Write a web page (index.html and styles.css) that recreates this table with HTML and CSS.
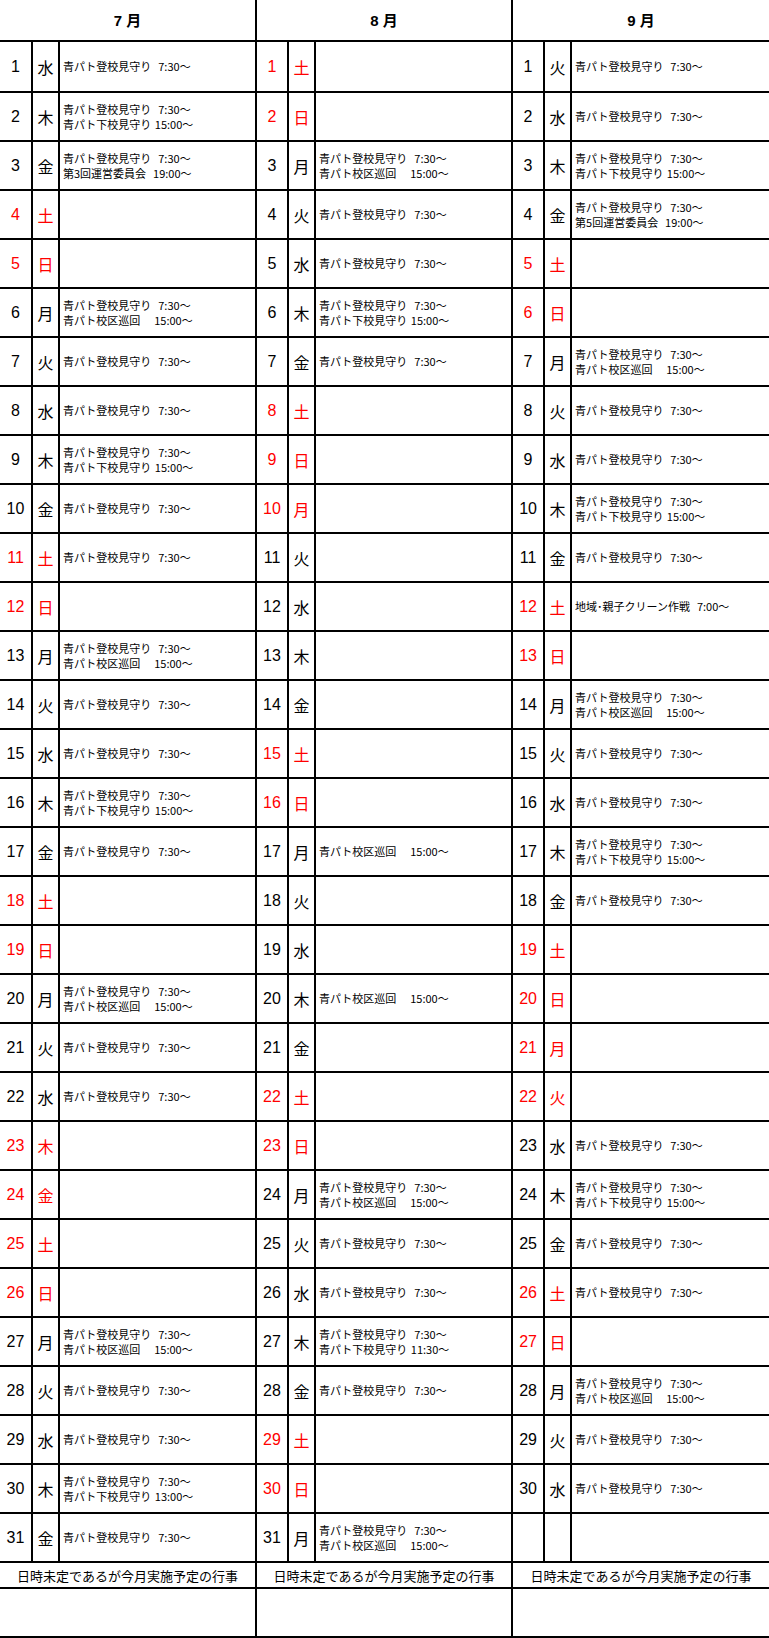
FILE: index.html
```html
<!DOCTYPE html>
<html lang="ja">
<head>
<meta charset="utf-8">
<title>7月・8月・9月 行事予定</title>
<link rel="stylesheet" href="styles.css">
</head>
<body>
<table class="cal">
<colgroup>
<col class="cd"><col class="cw"><col class="ct">
<col class="cd"><col class="cw"><col class="ct">
<col class="cd"><col class="cw"><col class="ct9">
</colgroup>
<thead>
<tr class="hd"><th colspan="3">7 月</th><th colspan="3">8 月</th><th colspan="3">9 月</th></tr>
</thead>
<tbody>
<tr class="first">
<td class="d">1</td><td class="w">水</td><td class="t"><div>青パト登校見守り  7:30～</div></td>
<td class="d r">1</td><td class="w r">土</td><td class="t"></td>
<td class="d">1</td><td class="w">火</td><td class="t"><div>青パト登校見守り  7:30～</div></td>
</tr>
<tr>
<td class="d">2</td><td class="w">木</td><td class="t"><div>青パト登校見守り  7:30～</div><div>青パト下校見守り 15:00～</div></td>
<td class="d r">2</td><td class="w r">日</td><td class="t"></td>
<td class="d">2</td><td class="w">水</td><td class="t"><div>青パト登校見守り  7:30～</div></td>
</tr>
<tr>
<td class="d">3</td><td class="w">金</td><td class="t"><div>青パト登校見守り  7:30～</div><div>第3回運営委員会  19:00～</div></td>
<td class="d">3</td><td class="w">月</td><td class="t"><div>青パト登校見守り  7:30～</div><div>青パト校区巡回    15:00～</div></td>
<td class="d">3</td><td class="w">木</td><td class="t"><div>青パト登校見守り  7:30～</div><div>青パト下校見守り 15:00～</div></td>
</tr>
<tr>
<td class="d r">4</td><td class="w r">土</td><td class="t"></td>
<td class="d">4</td><td class="w">火</td><td class="t"><div>青パト登校見守り  7:30～</div></td>
<td class="d">4</td><td class="w">金</td><td class="t"><div>青パト登校見守り  7:30～</div><div>第5回運営委員会  19:00～</div></td>
</tr>
<tr>
<td class="d r">5</td><td class="w r">日</td><td class="t"></td>
<td class="d">5</td><td class="w">水</td><td class="t"><div>青パト登校見守り  7:30～</div></td>
<td class="d r">5</td><td class="w r">土</td><td class="t"></td>
</tr>
<tr>
<td class="d">6</td><td class="w">月</td><td class="t"><div>青パト登校見守り  7:30～</div><div>青パト校区巡回    15:00～</div></td>
<td class="d">6</td><td class="w">木</td><td class="t"><div>青パト登校見守り  7:30～</div><div>青パト下校見守り 15:00～</div></td>
<td class="d r">6</td><td class="w r">日</td><td class="t"></td>
</tr>
<tr>
<td class="d">7</td><td class="w">火</td><td class="t"><div>青パト登校見守り  7:30～</div></td>
<td class="d">7</td><td class="w">金</td><td class="t"><div>青パト登校見守り  7:30～</div></td>
<td class="d">7</td><td class="w">月</td><td class="t"><div>青パト登校見守り  7:30～</div><div>青パト校区巡回    15:00～</div></td>
</tr>
<tr>
<td class="d">8</td><td class="w">水</td><td class="t"><div>青パト登校見守り  7:30～</div></td>
<td class="d r">8</td><td class="w r">土</td><td class="t"></td>
<td class="d">8</td><td class="w">火</td><td class="t"><div>青パト登校見守り  7:30～</div></td>
</tr>
<tr>
<td class="d">9</td><td class="w">木</td><td class="t"><div>青パト登校見守り  7:30～</div><div>青パト下校見守り 15:00～</div></td>
<td class="d r">9</td><td class="w r">日</td><td class="t"></td>
<td class="d">9</td><td class="w">水</td><td class="t"><div>青パト登校見守り  7:30～</div></td>
</tr>
<tr>
<td class="d">10</td><td class="w">金</td><td class="t"><div>青パト登校見守り  7:30～</div></td>
<td class="d r">10</td><td class="w r">月</td><td class="t"></td>
<td class="d">10</td><td class="w">木</td><td class="t"><div>青パト登校見守り  7:30～</div><div>青パト下校見守り 15:00～</div></td>
</tr>
<tr>
<td class="d r">11</td><td class="w r">土</td><td class="t"><div>青パト登校見守り  7:30～</div></td>
<td class="d">11</td><td class="w">火</td><td class="t"></td>
<td class="d">11</td><td class="w">金</td><td class="t"><div>青パト登校見守り  7:30～</div></td>
</tr>
<tr>
<td class="d r">12</td><td class="w r">日</td><td class="t"></td>
<td class="d">12</td><td class="w">水</td><td class="t"></td>
<td class="d r">12</td><td class="w r">土</td><td class="t"><div>地域･親子クリーン作戦  7:00～</div></td>
</tr>
<tr>
<td class="d">13</td><td class="w">月</td><td class="t"><div>青パト登校見守り  7:30～</div><div>青パト校区巡回    15:00～</div></td>
<td class="d">13</td><td class="w">木</td><td class="t"></td>
<td class="d r">13</td><td class="w r">日</td><td class="t"></td>
</tr>
<tr>
<td class="d">14</td><td class="w">火</td><td class="t"><div>青パト登校見守り  7:30～</div></td>
<td class="d">14</td><td class="w">金</td><td class="t"></td>
<td class="d">14</td><td class="w">月</td><td class="t"><div>青パト登校見守り  7:30～</div><div>青パト校区巡回    15:00～</div></td>
</tr>
<tr>
<td class="d">15</td><td class="w">水</td><td class="t"><div>青パト登校見守り  7:30～</div></td>
<td class="d r">15</td><td class="w r">土</td><td class="t"></td>
<td class="d">15</td><td class="w">火</td><td class="t"><div>青パト登校見守り  7:30～</div></td>
</tr>
<tr>
<td class="d">16</td><td class="w">木</td><td class="t"><div>青パト登校見守り  7:30～</div><div>青パト下校見守り 15:00～</div></td>
<td class="d r">16</td><td class="w r">日</td><td class="t"></td>
<td class="d">16</td><td class="w">水</td><td class="t"><div>青パト登校見守り  7:30～</div></td>
</tr>
<tr>
<td class="d">17</td><td class="w">金</td><td class="t"><div>青パト登校見守り  7:30～</div></td>
<td class="d">17</td><td class="w">月</td><td class="t"><div>青パト校区巡回    15:00～</div></td>
<td class="d">17</td><td class="w">木</td><td class="t"><div>青パト登校見守り  7:30～</div><div>青パト下校見守り 15:00～</div></td>
</tr>
<tr>
<td class="d r">18</td><td class="w r">土</td><td class="t"></td>
<td class="d">18</td><td class="w">火</td><td class="t"></td>
<td class="d">18</td><td class="w">金</td><td class="t"><div>青パト登校見守り  7:30～</div></td>
</tr>
<tr>
<td class="d r">19</td><td class="w r">日</td><td class="t"></td>
<td class="d">19</td><td class="w">水</td><td class="t"></td>
<td class="d r">19</td><td class="w r">土</td><td class="t"></td>
</tr>
<tr>
<td class="d">20</td><td class="w">月</td><td class="t"><div>青パト登校見守り  7:30～</div><div>青パト校区巡回    15:00～</div></td>
<td class="d">20</td><td class="w">木</td><td class="t"><div>青パト校区巡回    15:00～</div></td>
<td class="d r">20</td><td class="w r">日</td><td class="t"></td>
</tr>
<tr>
<td class="d">21</td><td class="w">火</td><td class="t"><div>青パト登校見守り  7:30～</div></td>
<td class="d">21</td><td class="w">金</td><td class="t"></td>
<td class="d r">21</td><td class="w r">月</td><td class="t"></td>
</tr>
<tr>
<td class="d">22</td><td class="w">水</td><td class="t"><div>青パト登校見守り  7:30～</div></td>
<td class="d r">22</td><td class="w r">土</td><td class="t"></td>
<td class="d r">22</td><td class="w r">火</td><td class="t"></td>
</tr>
<tr>
<td class="d r">23</td><td class="w r">木</td><td class="t"></td>
<td class="d r">23</td><td class="w r">日</td><td class="t"></td>
<td class="d">23</td><td class="w">水</td><td class="t"><div>青パト登校見守り  7:30～</div></td>
</tr>
<tr>
<td class="d r">24</td><td class="w r">金</td><td class="t"></td>
<td class="d">24</td><td class="w">月</td><td class="t"><div>青パト登校見守り  7:30～</div><div>青パト校区巡回    15:00～</div></td>
<td class="d">24</td><td class="w">木</td><td class="t"><div>青パト登校見守り  7:30～</div><div>青パト下校見守り 15:00～</div></td>
</tr>
<tr>
<td class="d r">25</td><td class="w r">土</td><td class="t"></td>
<td class="d">25</td><td class="w">火</td><td class="t"><div>青パト登校見守り  7:30～</div></td>
<td class="d">25</td><td class="w">金</td><td class="t"><div>青パト登校見守り  7:30～</div></td>
</tr>
<tr>
<td class="d r">26</td><td class="w r">日</td><td class="t"></td>
<td class="d">26</td><td class="w">水</td><td class="t"><div>青パト登校見守り  7:30～</div></td>
<td class="d r">26</td><td class="w r">土</td><td class="t"><div>青パト登校見守り  7:30～</div></td>
</tr>
<tr>
<td class="d">27</td><td class="w">月</td><td class="t"><div>青パト登校見守り  7:30～</div><div>青パト校区巡回    15:00～</div></td>
<td class="d">27</td><td class="w">木</td><td class="t"><div>青パト登校見守り  7:30～</div><div>青パト下校見守り 11:30～</div></td>
<td class="d r">27</td><td class="w r">日</td><td class="t"></td>
</tr>
<tr>
<td class="d">28</td><td class="w">火</td><td class="t"><div>青パト登校見守り  7:30～</div></td>
<td class="d">28</td><td class="w">金</td><td class="t"><div>青パト登校見守り  7:30～</div></td>
<td class="d">28</td><td class="w">月</td><td class="t"><div>青パト登校見守り  7:30～</div><div>青パト校区巡回    15:00～</div></td>
</tr>
<tr>
<td class="d">29</td><td class="w">水</td><td class="t"><div>青パト登校見守り  7:30～</div></td>
<td class="d r">29</td><td class="w r">土</td><td class="t"></td>
<td class="d">29</td><td class="w">火</td><td class="t"><div>青パト登校見守り  7:30～</div></td>
</tr>
<tr>
<td class="d">30</td><td class="w">木</td><td class="t"><div>青パト登校見守り  7:30～</div><div>青パト下校見守り 13:00～</div></td>
<td class="d r">30</td><td class="w r">日</td><td class="t"></td>
<td class="d">30</td><td class="w">水</td><td class="t"><div>青パト登校見守り  7:30～</div></td>
</tr>
<tr>
<td class="d">31</td><td class="w">金</td><td class="t"><div>青パト登校見守り  7:30～</div></td>
<td class="d">31</td><td class="w">月</td><td class="t"><div>青パト登校見守り  7:30～</div><div>青パト校区巡回    15:00～</div></td>
<td class="d"></td><td class="w"></td><td class="t"></td>
</tr>
<tr class="lbl">
<td colspan="3">日時未定であるが今月実施予定の行事</td>
<td colspan="3">日時未定であるが今月実施予定の行事</td>
<td colspan="3">日時未定であるが今月実施予定の行事</td>
</tr>
<tr class="blank">
<td colspan="3"></td><td colspan="3"></td><td colspan="3"></td>
</tr>
</tbody>
</table>
</body>
</html>
```
FILE: styles.css
```css
html, body {
  margin: 0;
  padding: 0;
  background: #fff;
}

body {
  font-family: "Noto Sans CJK JP", "Noto Sans", sans-serif;
  color: #000;
}

.cal {
  border-collapse: collapse;
  table-layout: fixed;
  width: 769px;
  border: none;
}

.cd { width: 32px; }
.cw { width: 27px; }
.ct { width: 197px; }
.ct9 { width: 198px; }

.cal th,
.cal td {
  border: 2px solid #000;
  padding: 0;
  vertical-align: middle;
}

.cal tr > :first-child { border-left: none; }
.cal tr > :last-child { border-right: none; }

.hd th {
  border-top: none;
  height: 40px;
  font-family: "Liberation Sans", "Noto Sans CJK JP", sans-serif;
  font-size: 15px;
  font-weight: bold;
  text-align: center;
  line-height: 1;
}

.cal tbody tr { height: 49px; }
.cal tbody tr.first { height: 51px; }

.d {
  font-family: "Liberation Sans", Arial, sans-serif;
  font-size: 16px;
  text-align: center;
}

.w {
  font-size: 16px;
  text-align: center;
}

.t {
  font-size: 11px;
  line-height: 15px;
  padding-left: 3px !important;
  white-space: pre;
  word-spacing: 1px;
}

.r { color: #f00; }

.cal tbody tr.lbl { height: 26px; }

.lbl td {
  font-size: 13px;
  text-align: center;
  line-height: 1;
}

.cal tbody tr.blank { height: 49px; }
```
